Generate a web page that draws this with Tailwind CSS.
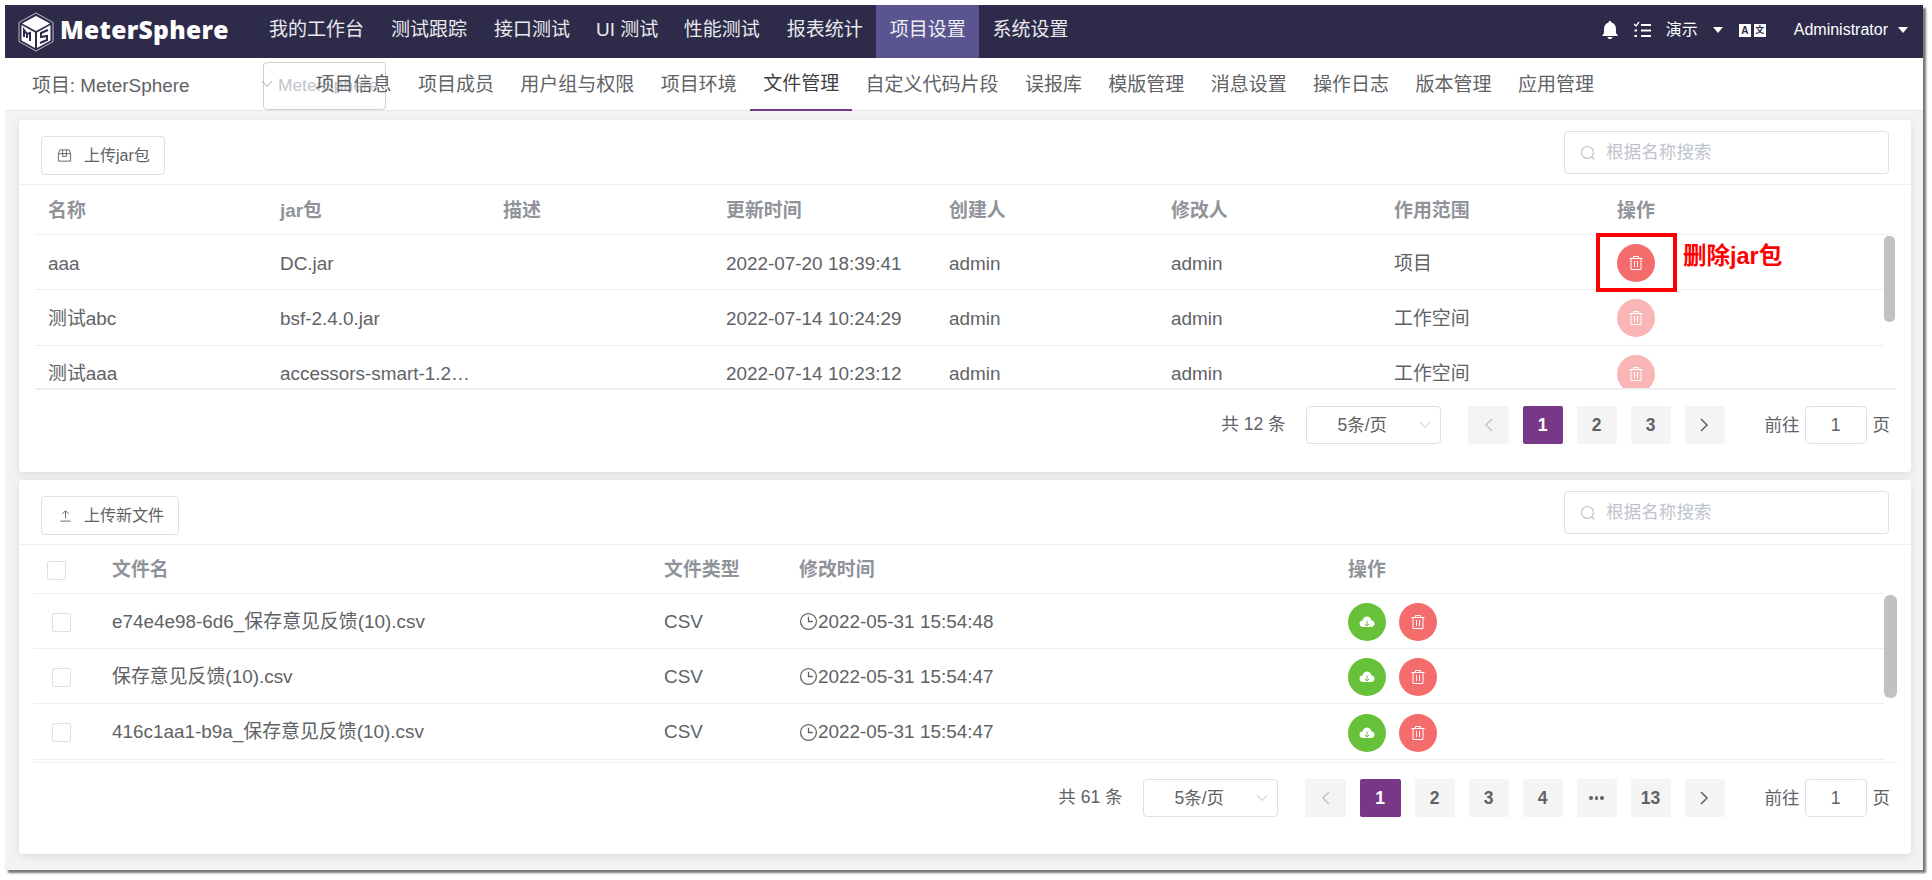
<!DOCTYPE html>
<html lang="en">
<head>
    <meta charset="UTF-8">
    <title>MeterSphere</title>
    <script src="https://cdn.jsdelivr.net/npm/@tailwindcss/browser@4"></script>
</head>
<body class="bg-white h-[880px] overflow-hidden font-['Liberation_Sans','Noto_Sans_CJK_SC',sans-serif] text-[18.9px] text-[#606266]">
    <div class="ml-[5px] mt-[5px] w-[1918px] h-[865px] bg-[#f3f3f4] shadow-[3px_3px_2px_#777] flex flex-col relative">
        <!-- Top nav -->
        <header class="h-[53px] bg-[#2d2a4a] flex items-center text-white shrink-0">
            <div class="w-[250.5px] pl-[13px] flex items-center gap-[6px] shrink-0">
                <svg width="36" height="40" viewBox="0 0 36 40">
                    <path d="M18 1 L35 10.500 V29.500 L18 39 L1 29.500 V10.500 Z" fill="none" stroke="#fff" stroke-width="0.700"/>
                    <path d="M18 4 L32 11.500 L18 19 L4 11.500 Z" fill="#fff"/>
                    <path d="M3.500 13 L17 20.500 V36 L3.500 28.500 Z" fill="#fff"/>
                    <path d="M32.500 13 L19 20.500 V36 L32.500 28.500 Z" fill="#fff"/>
                    <path d="M6 25 V18 L9 22 L12 21 V29 M9 22 V26" fill="none" stroke="#2d2a4a" stroke-width="2"/>
                    <path d="M30 18 L23 21 V25 L29 24 V28 L22 31" fill="none" stroke="#2d2a4a" stroke-width="2"/>
                </svg>
                <span class="text-[24.6px] font-extrabold tracking-[0.3px] font-['Open_Sans'] pb-[3px]">MeterSphere</span>
            </div>
            <nav class="flex h-full text-[19px] text-white/90">
                <a class="px-[13.5px] flex items-center pb-[3px]">我的工作台</a>
                <a class="px-[13.5px] flex items-center pb-[3px]">测试跟踪</a>
                <a class="px-[13.5px] flex items-center pb-[3px]">接口测试</a>
                <a class="pl-[12.5px] pr-[12px] flex items-center pb-[3px]">UI 测试</a>
                <a class="px-[13.5px] flex items-center pb-[3px]">性能测试</a>
                <a class="px-[13.5px] flex items-center pb-[3px]">报表统计</a>
                <a class="px-[13.5px] flex items-center pb-[3px] bg-[#5a5490]">项目设置</a>
                <a class="pl-[13px] pr-[13.5px] flex items-center pb-[3px]">系统设置</a>
            </nav>
            <div class="ml-auto flex items-center h-full pr-[15px] pb-[3px] text-[16px]">
                <svg width="18" height="20" viewBox="0 0 18 20" fill="#fff" class="mr-[14px]">
                    <path d="M9 1 C10 1 10.500 1.700 10.500 2.500 C13.500 3.300 15 6 15 9 V13 L17 16 H1 L3 13 V9 C3 6 4.500 3.300 7.500 2.500 C7.500 1.700 8 1 9 1 Z M6.500 17 H11.500 C11.200 18.500 10.200 19 9 19 C7.800 19 6.800 18.500 6.500 17 Z"/>
                </svg>
                <svg width="19" height="18" viewBox="0 0 19 18" fill="none" stroke="#fff" stroke-width="2" class="mr-[14px]">
                    <path d="M1 3 L3 5 L6 1" stroke-width="1.300"/>
                    <path d="M8 4 H18 M8 9.500 H18 M8 15 H18"/>
                    <path d="M1.500 9.500 H4 M1.500 15 H4" stroke-width="2"/>
                </svg>
                <span>演示</span>
                <span class="ml-[15px] w-0 h-0 border-x-[5px] border-x-transparent border-t-[6px] border-t-white"></span>
                <div class="ml-[16px] flex gap-[3px]">
                    <span class="w-[12px] h-[13px] bg-white text-[#2d2a4a] text-[10px] font-bold leading-[13px] text-center">A</span>
                    <span class="w-[12px] h-[13px] bg-white text-[#2d2a4a] text-[9px] font-bold leading-[13px] text-center">文</span>
                </div>
                <span class="ml-[28px]">Administrator</span>
                <span class="ml-[10px] w-0 h-0 border-x-[5px] border-x-transparent border-t-[6px] border-t-white"></span>
            </div>
        </header>

        <!-- Second nav -->
        <div class="h-[53px] bg-white border-b border-[#e6e6e6] flex shrink-0 relative">
            <div class="pl-[27px] w-[250px] pt-[15px] leading-[26px] shrink-0 whitespace-nowrap">项目: MeterSphere</div>
            <div class="absolute left-[258px] top-[4px] w-[123px] h-[48px] border border-[#cfcfcf] rounded-[4px] bg-white flex items-center pl-[14px] text-[17.33px] text-[#c0c4cc] whitespace-nowrap overflow-hidden">MeterSphere</div>
            <svg class="absolute left-[256px] top-[22px]" width="12" height="8" viewBox="0 0 12 8" fill="none" stroke="#aaa"><path d="M1 1 L6 6.500 L11 1"/></svg>
            <nav class="absolute left-[297.4px] top-0 flex h-[53px] text-[19px]">
                <a class="px-[13.2px] pt-[2px] flex items-center">项目信息</a>
                <a class="px-[13.2px] pt-[2px] flex items-center">项目成员</a>
                <a class="px-[13.2px] pt-[2px] flex items-center">用户组与权限</a>
                <a class="px-[13.2px] pt-[2px] flex items-center">项目环境</a>
                <a class="px-[13.2px] pt-[2px] flex items-center border-b-2 border-[#783887] text-[#3f3f3f]">文件管理</a>
                <a class="px-[13.2px] pt-[2px] flex items-center">自定义代码片段</a>
                <a class="px-[13.2px] pt-[2px] flex items-center">误报库</a>
                <a class="px-[13.2px] pt-[2px] flex items-center">模版管理</a>
                <a class="px-[13.2px] pt-[2px] flex items-center">消息设置</a>
                <a class="px-[13.2px] pt-[2px] flex items-center">操作日志</a>
                <a class="px-[13.2px] pt-[2px] flex items-center">版本管理</a>
                <a class="px-[13.2px] pt-[2px] flex items-center">应用管理</a>
            </nav>
        </div>

        <!-- Jar card -->
        <section class="ml-[14px] mr-[12px] mt-[9px] h-[352px] bg-white rounded-[4px] shadow-[0_2px_8px_rgba(0,0,0,0.1)] shrink-0 flex flex-col">
            <div class="h-[65px] border-b border-[#ebeef5] flex items-start justify-between pl-[22px] pr-[22px] shrink-0">
                <button class="h-[39px] mt-[16px] w-[124px] border border-[#dcdfe6] rounded-[4px] flex items-center pl-[15px] text-[16px] text-[#606266]">
                    <svg width="15" height="15" viewBox="0 0 16 16" fill="none" stroke="#606266" class="mr-[12px]"><path d="M1.500 6 L3 2 H13 L14.500 6 V14 H1.500 Z M1.500 6 H14.500 M6 2 V9 H10 V2"/></svg>
                    上传jar包
                </button>
                <div class="w-[325px] h-[43px] mt-[11px] border border-[#dcdfe6] rounded-[4px] flex items-center pl-[15px] text-[17.6px] text-[#c0c4cc]">
                    <svg width="16" height="16" viewBox="0 0 16 16" fill="none" stroke="#c0c4cc" stroke-width="1.200" class="mr-[10px]"><circle cx="7.500" cy="7.500" r="6"/><path d="M12 12 L14.500 14.500"/></svg>
                    根据名称搜索
                </div>
            </div>
            <div class="mx-[16px] relative h-[205px] border-b-2 border-[#ebeef5] overflow-hidden shrink-0">
                <div class="h-[50px] pt-[4px] grid grid-cols-[232px_223px_223px_223px_222px_223px_223px_1fr] items-center font-bold text-[#909399] border-b border-[#ebeef5]">
                    <span class="pl-[13px]">名称</span><span class="pl-[13px]">jar包</span><span class="pl-[13px]">描述</span><span class="pl-[13px]">更新时间</span><span class="pl-[13px]">创建人</span><span class="pl-[13px]">修改人</span><span class="pl-[13px]">作用范围</span><span class="pl-[13px]">操作</span>
                </div>
                <div class="mr-[12px] h-[55px] pt-[2px] grid grid-cols-[232px_223px_223px_223px_222px_223px_223px_1fr] items-center border-b border-[#ebeef5]">
                    <span class="pl-[13px] pt-[2px]">aaa</span><span class="pl-[13px] pt-[2px]">DC.jar</span><span></span><span class="pl-[13px] pt-[2px]">2022-07-20 18:39:41</span><span class="pl-[13px] pt-[2px]">admin</span><span class="pl-[13px] pt-[2px]">admin</span><span class="pl-[13px] pt-[2px]">项目</span>
                    <span class="pl-[13px]"><span class="w-[38px] h-[38px] rounded-full bg-[#f56c6c] flex items-center justify-center"><svg width="16" height="16" viewBox="0 0 16 16" fill="none" stroke="#fff"><path d="M1.500 3.500 H14.500 M5.500 3.500 V1.500 H10.500 V3.500 M3 3.500 V14.500 H13 V3.500 M6.500 6 V12 M9.500 6 V12"/></svg></span></span>
                </div>
                <div class="mr-[12px] h-[56px] pt-[1px] grid grid-cols-[232px_223px_223px_223px_222px_223px_223px_1fr] items-center border-b border-[#ebeef5]">
                    <span class="pl-[13px] pt-[2px]">测试abc</span><span class="pl-[13px] pt-[2px]">bsf-2.4.0.jar</span><span></span><span class="pl-[13px] pt-[2px]">2022-07-14 10:24:29</span><span class="pl-[13px] pt-[2px]">admin</span><span class="pl-[13px] pt-[2px]">admin</span><span class="pl-[13px] pt-[2px]">工作空间</span>
                    <span class="pl-[13px]"><span class="w-[38px] h-[38px] rounded-full bg-[#fab6b6] flex items-center justify-center"><svg width="16" height="16" viewBox="0 0 16 16" fill="none" stroke="#fff"><path d="M1.500 3.500 H14.500 M5.500 3.500 V1.500 H10.500 V3.500 M3 3.500 V14.500 H13 V3.500 M6.500 6 V12 M9.500 6 V12"/></svg></span></span>
                </div>
                <div class="mr-[12px] h-[55px] grid grid-cols-[232px_223px_223px_223px_222px_223px_223px_1fr] items-center">
                    <span class="pl-[13px] pt-[2px]">测试aaa</span><span class="pl-[13px] pr-[17px] pt-[2px] truncate">accessors-smart-1.2.jar</span><span></span><span class="pl-[13px] pt-[2px]">2022-07-14 10:23:12</span><span class="pl-[13px] pt-[2px]">admin</span><span class="pl-[13px] pt-[2px]">admin</span><span class="pl-[13px] pt-[2px]">工作空间</span>
                    <span class="pl-[13px]"><span class="w-[38px] h-[38px] rounded-full bg-[#fab6b6] flex items-center justify-center"><svg width="16" height="16" viewBox="0 0 16 16" fill="none" stroke="#fff"><path d="M1.500 3.500 H14.500 M5.500 3.500 V1.500 H10.500 V3.500 M3 3.500 V14.500 H13 V3.500 M6.500 6 V12 M9.500 6 V12"/></svg></span></span>
                </div>
                <div class="absolute right-0 top-[51px] w-[11px] h-[86px] bg-[#c1c1c1] rounded-[5px]"></div>
            </div>
            <div class="flex items-center justify-end h-[38px] mt-[16px] pr-[21px] text-[17.5px]">
                <span class="mr-[20px] mt-[-2px]">共 12 条</span>
                <div class="w-[135px] h-[38px] border border-[#dcdfe6] rounded-[4px] flex items-center pl-[31px] pr-[9px] justify-between mr-[27px]">5条/页<svg width="12" height="8" viewBox="0 0 12 8" fill="none" stroke="#c0c4cc"><path d="M1 1 L6 6.500 L11 1"/></svg></div>
                <div class="flex gap-[14px] font-bold">
                    <span class="w-[41px] h-[38px] bg-[#f4f4f5] rounded-[2px] flex items-center justify-center"><svg width="9" height="14" viewBox="0 0 9 14" fill="none" stroke="#c0c4cc" stroke-width="1.500"><path d="M8 1 L2 7 L8 13"/></svg></span>
                    <span class="w-[40px] h-[38px] bg-[#783887] text-white rounded-[2px] flex items-center justify-center">1</span>
                    <span class="w-[40px] h-[38px] bg-[#f4f4f5] rounded-[2px] flex items-center justify-center">2</span>
                    <span class="w-[40px] h-[38px] bg-[#f4f4f5] rounded-[2px] flex items-center justify-center">3</span>
                    <span class="w-[40px] h-[38px] bg-[#f4f4f5] rounded-[2px] flex items-center justify-center"><svg width="9" height="14" viewBox="0 0 9 14" fill="none" stroke="#606266" stroke-width="1.500"><path d="M1 1 L7 7 L1 13"/></svg></span>
                </div>
                <span class="ml-[40px] mr-[5px]">前往</span>
                <div class="w-[62px] h-[38px] border border-[#dcdfe6] rounded-[4px] flex items-center justify-center">1</div>
                <span class="ml-[6px]">页</span>
            </div>
        </section>

        <!-- File card -->
        <section class="ml-[14px] mr-[12px] mt-[8px] h-[374px] bg-white rounded-[4px] shadow-[0_2px_8px_rgba(0,0,0,0.1)] shrink-0 flex flex-col">
            <div class="h-[65px] border-b border-[#ebeef5] flex items-start justify-between pl-[22px] pr-[22px] shrink-0">
                <button class="h-[39px] mt-[16px] w-[138px] border border-[#dcdfe6] rounded-[4px] flex items-center pl-[16px] text-[16px] text-[#606266]">
                    <svg width="15" height="15" viewBox="0 0 16 16" fill="none" stroke="#606266" class="mr-[11px]"><path d="M2.500 14 H13.500 M8 11 V3 M4.500 6.500 L8 3 L11.500 6.500"/></svg>
                    上传新文件
                </button>
                <div class="w-[325px] h-[43px] mt-[11px] border border-[#dcdfe6] rounded-[4px] flex items-center pl-[15px] text-[17.6px] text-[#c0c4cc]">
                    <svg width="16" height="16" viewBox="0 0 16 16" fill="none" stroke="#c0c4cc" stroke-width="1.200" class="mr-[10px]"><circle cx="7.500" cy="7.500" r="6"/><path d="M12 12 L14.500 14.500"/></svg>
                    根据名称搜索
                </div>
            </div>
            <div class="ml-[14px] mr-[14px] relative h-[218px] border-b border-[#ebeef5] overflow-hidden shrink-0">
                <div class="mr-[13px] h-[49px] pt-[2px] grid grid-cols-[79px_552px_135px_549px_1fr] items-center font-bold text-[#909399] border-b border-[#ebeef5]">
                    <span class="w-[19px] h-[19px] ml-[14px] border border-[#dcdfe6] rounded-[2px]"></span><span>文件名</span><span>文件类型</span><span>修改时间</span><span>操作</span>
                </div>
                <div class="mr-[13px] h-[55px] pt-[2px] grid grid-cols-[79px_552px_135px_549px_1fr] items-center border-b border-[#ebeef5]">
                    <span class="w-[19px] h-[19px] ml-[19px] border border-[#dcdfe6] rounded-[2px]"></span><span>e74e4e98-6d6_保存意见反馈(10).csv</span><span>CSV</span>
                    <span class="flex items-center"><svg class="shrink-0" width="19" height="19" viewBox="0 0 18 18" fill="none" stroke="#606266" stroke-width="1.200"><circle cx="9" cy="9" r="7.500"/><path d="M9 4.500 V9 H13"/></svg>2022-05-31 15:54:48</span>
                    <span class="flex gap-[13px]">
                        <span class="w-[38px] h-[38px] rounded-full bg-[#67c23a] flex items-center justify-center"><svg width="16" height="14" viewBox="0 0 16 14"><path d="M4 12 C1.500 12 0.500 10 0.500 8.500 C0.500 6.800 2 5.500 3.500 5.500 C4 3 6 1.500 8 1.500 C10 1.500 12 3 12.500 5.500 C14 5.500 15.500 6.800 15.500 8.500 C15.500 10 14.500 12 12 12 Z" fill="#fff"/><path d="M8 5.500 V11 M6 9 L8 11 L10 9" fill="none" stroke="#67c23a"/></svg></span>
                        <span class="w-[38px] h-[38px] rounded-full bg-[#f56c6c] flex items-center justify-center"><svg width="16" height="16" viewBox="0 0 16 16" fill="none" stroke="#fff"><path d="M1.500 3.500 H14.500 M5.500 3.500 V1.500 H10.500 V3.500 M3 3.500 V14.500 H13 V3.500 M6.500 6 V12 M9.500 6 V12"/></svg></span>
                    </span>
                </div>
                <div class="mr-[13px] h-[55px] pt-[2px] grid grid-cols-[79px_552px_135px_549px_1fr] items-center border-b border-[#ebeef5]">
                    <span class="w-[19px] h-[19px] ml-[19px] border border-[#dcdfe6] rounded-[2px]"></span><span>保存意见反馈(10).csv</span><span>CSV</span>
                    <span class="flex items-center"><svg class="shrink-0" width="19" height="19" viewBox="0 0 18 18" fill="none" stroke="#606266" stroke-width="1.200"><circle cx="9" cy="9" r="7.500"/><path d="M9 4.500 V9 H13"/></svg>2022-05-31 15:54:47</span>
                    <span class="flex gap-[13px]">
                        <span class="w-[38px] h-[38px] rounded-full bg-[#67c23a] flex items-center justify-center"><svg width="16" height="14" viewBox="0 0 16 14"><path d="M4 12 C1.500 12 0.500 10 0.500 8.500 C0.500 6.800 2 5.500 3.500 5.500 C4 3 6 1.500 8 1.500 C10 1.500 12 3 12.500 5.500 C14 5.500 15.500 6.800 15.500 8.500 C15.500 10 14.500 12 12 12 Z" fill="#fff"/><path d="M8 5.500 V11 M6 9 L8 11 L10 9" fill="none" stroke="#67c23a"/></svg></span>
                        <span class="w-[38px] h-[38px] rounded-full bg-[#f56c6c] flex items-center justify-center"><svg width="16" height="16" viewBox="0 0 16 16" fill="none" stroke="#fff"><path d="M1.500 3.500 H14.500 M5.500 3.500 V1.500 H10.500 V3.500 M3 3.500 V14.500 H13 V3.500 M6.500 6 V12 M9.500 6 V12"/></svg></span>
                    </span>
                </div>
                <div class="mr-[13px] h-[56px] pt-[2px] grid grid-cols-[79px_552px_135px_549px_1fr] items-center border-b border-[#ebeef5]">
                    <span class="w-[19px] h-[19px] ml-[19px] border border-[#dcdfe6] rounded-[2px]"></span><span>416c1aa1-b9a_保存意见反馈(10).csv</span><span>CSV</span>
                    <span class="flex items-center"><svg class="shrink-0" width="19" height="19" viewBox="0 0 18 18" fill="none" stroke="#606266" stroke-width="1.200"><circle cx="9" cy="9" r="7.500"/><path d="M9 4.500 V9 H13"/></svg>2022-05-31 15:54:47</span>
                    <span class="flex gap-[13px]">
                        <span class="w-[38px] h-[38px] rounded-full bg-[#67c23a] flex items-center justify-center"><svg width="16" height="14" viewBox="0 0 16 14"><path d="M4 12 C1.500 12 0.500 10 0.500 8.500 C0.500 6.800 2 5.500 3.500 5.500 C4 3 6 1.500 8 1.500 C10 1.500 12 3 12.500 5.500 C14 5.500 15.500 6.800 15.500 8.500 C15.500 10 14.500 12 12 12 Z" fill="#fff"/><path d="M8 5.500 V11 M6 9 L8 11 L10 9" fill="none" stroke="#67c23a"/></svg></span>
                        <span class="w-[38px] h-[38px] rounded-full bg-[#f56c6c] flex items-center justify-center"><svg width="16" height="16" viewBox="0 0 16 16" fill="none" stroke="#fff"><path d="M1.500 3.500 H14.500 M5.500 3.500 V1.500 H10.500 V3.500 M3 3.500 V14.500 H13 V3.500 M6.500 6 V12 M9.500 6 V12"/></svg></span>
                    </span>
                </div>
                <div class="absolute right-0 top-[50px] w-[13px] h-[103px] bg-[#c1c1c1] rounded-[6px]"></div>
            </div>
            <div class="flex items-center justify-end h-[38px] mt-[16px] pr-[21px] text-[17.5px]">
                <span class="mr-[20px] mt-[-2px]">共 61 条</span>
                <div class="w-[135px] h-[38px] border border-[#dcdfe6] rounded-[4px] flex items-center pl-[31px] pr-[9px] justify-between mr-[27px]">5条/页<svg width="12" height="8" viewBox="0 0 12 8" fill="none" stroke="#c0c4cc"><path d="M1 1 L6 6.500 L11 1"/></svg></div>
                <div class="flex gap-[14px] font-bold">
                    <span class="w-[41px] h-[38px] bg-[#f4f4f5] rounded-[2px] flex items-center justify-center"><svg width="9" height="14" viewBox="0 0 9 14" fill="none" stroke="#c0c4cc" stroke-width="1.500"><path d="M8 1 L2 7 L8 13"/></svg></span>
                    <span class="w-[41px] h-[38px] bg-[#783887] text-white rounded-[2px] flex items-center justify-center">1</span>
                    <span class="w-[40px] h-[38px] bg-[#f4f4f5] rounded-[2px] flex items-center justify-center">2</span>
                    <span class="w-[40px] h-[38px] bg-[#f4f4f5] rounded-[2px] flex items-center justify-center">3</span>
                    <span class="w-[40px] h-[38px] bg-[#f4f4f5] rounded-[2px] flex items-center justify-center">4</span>
                    <span class="w-[40px] h-[38px] bg-[#f4f4f5] rounded-[2px] flex items-center justify-center gap-[2px]"><i class="w-[3.500px] h-[3.500px] rounded-full bg-[#606266]"></i><i class="w-[3.500px] h-[3.500px] rounded-full bg-[#606266]"></i><i class="w-[3.500px] h-[3.500px] rounded-full bg-[#606266]"></i></span>
                    <span class="w-[40px] h-[38px] bg-[#f4f4f5] rounded-[2px] flex items-center justify-center">13</span>
                    <span class="w-[40px] h-[38px] bg-[#f4f4f5] rounded-[2px] flex items-center justify-center"><svg width="9" height="14" viewBox="0 0 9 14" fill="none" stroke="#606266" stroke-width="1.500"><path d="M1 1 L7 7 L1 13"/></svg></span>
                </div>
                <span class="ml-[40px] mr-[5px]">前往</span>
                <div class="w-[62px] h-[38px] border border-[#dcdfe6] rounded-[4px] flex items-center justify-center">1</div>
                <span class="ml-[6px]">页</span>
            </div>
        </section>

        <!-- Red annotation drawn over the screenshot -->
        <div class="absolute left-[1591px] top-[228px] w-[81px] h-[59px] border-4 border-[#ff0000]"></div>
        <span class="absolute left-[1678px] top-[237px] text-[23.5px] font-bold text-[#ff0000] leading-[28px] whitespace-nowrap">删除jar包</span>
    </div>
</body>
</html>
